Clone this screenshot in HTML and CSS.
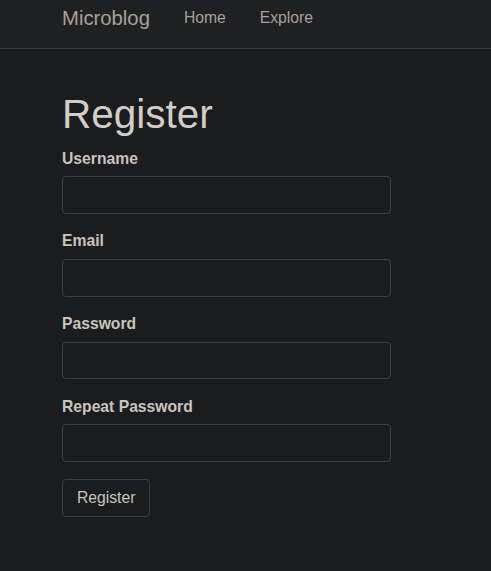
FILE: index.html
```html
<!DOCTYPE html>
<html lang="en">
<head>
<meta charset="utf-8">
<title>Register - Microblog</title>
<link rel="stylesheet" href="styles.css">
</head>
<body>
<nav class="navbar">
  <div class="navbar-inner">
    <a class="brand" href="#">Microblog</a>
    <ul class="nav">
      <li><a href="#">Home</a></li>
      <li><a href="#">Explore</a></li>
    </ul>
  </div>
</nav>
<main class="main">
  <h1 class="title">Register</h1>
  <form class="form">
    <div class="form-group">
      <label class="label" for="username">Username</label>
      <input class="input" id="username" type="text">
    </div>
    <div class="form-group">
      <label class="label" for="email">Email</label>
      <input class="input" id="email" type="text">
    </div>
    <div class="form-group">
      <label class="label" for="password">Password</label>
      <input class="input" id="password" type="password">
    </div>
    <div class="form-group">
      <label class="label" for="password2">Repeat Password</label>
      <input class="input" id="password2" type="password">
    </div>
    <button class="btn" type="button">Register</button>
  </form>
</main>
</body>
</html>
```

FILE: styles.css
```css
html, body {
  margin: 0;
  padding: 0;
}
body {
  background: #1b1c1e;
  color: #c9c4bd;
  font-family: "Liberation Sans", Arial, sans-serif;
  font-size: 15.7px;
  line-height: 22px;
}
a {
  text-decoration: none;
}
.navbar {
  height: 48px;
  background: #1f2022;
  border-bottom: 1px solid #37393c;
}
.navbar-inner {
  display: flex;
  align-items: flex-start;
  padding: 7px 0 0 62px;
}
.brand {
  font-size: 20.3px;
  line-height: 22px;
  color: #a7a196;
}
.nav {
  display: flex;
  gap: 34px;
  list-style: none;
  margin: 0 0 0 34px;
  padding: 0;
}
.nav a {
  font-size: 15.7px;
  line-height: 22px;
  color: #a7a196;
}
.main {
  padding: 44px 62px 0 62px;
}
.title {
  font-size: 40.5px;
  font-weight: 400;
  line-height: 43.6px;
  margin: 0 0 11px 0;
  color: #d2cdc6;
}
.form {
  margin: 0;
}
.form-group {
  display: flex;
  flex-direction: column;
  align-items: flex-start;
  margin-bottom: 16.3px;
}
.label {
  font-weight: 700;
  font-size: 15.7px;
  line-height: 22px;
  margin-bottom: 6.8px;
  color: #c9c4bd;
}
.input {
  box-sizing: border-box;
  width: 329px;
  height: 37.6px;
  margin: 0;
  padding: 6px 12px;
  background: #1b1c1e;
  border: 1px solid #3d3f42;
  border-radius: 4px;
  color: #c9c4bd;
  font: inherit;
}
.btn {
  box-sizing: border-box;
  height: 37.4px;
  padding: 0 14px;
  margin: 1px 0 0 0;
  background: #1b1c1e;
  border: 1px solid #3d3f42;
  border-radius: 4px;
  color: #c9c4bd;
  font-family: "Liberation Sans", Arial, sans-serif;
  font-size: 15.7px;
  line-height: 22px;
}
```
